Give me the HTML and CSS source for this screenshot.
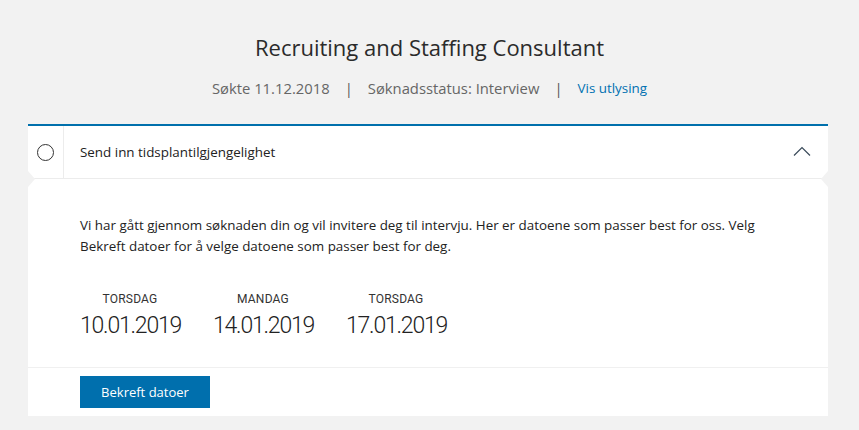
FILE: index.html
```html
<!DOCTYPE html>
<html lang="no">
<head>
<meta charset="utf-8">
<title>Recruiting and Staffing Consultant</title>
<link rel="stylesheet" href="styles.css">
</head>
<body>
<header class="page-head">
  <h1 class="title">Recruiting and Staffing Consultant</h1>
  <div class="meta">
    <span>Søkte 11.12.2018</span>
    <span class="sep">|</span>
    <span>Søknadsstatus: Interview</span>
    <span class="sep">|</span>
    <a class="link" href="#">Vis utlysing</a>
  </div>
</header>
<section class="card">
  <div class="card-head">
    <div class="status-cell"><span class="circle"></span></div>
    <div class="head-title">Send inn tidsplantilgjengelighet</div>
    <svg class="chevron" width="18" height="10" viewBox="0 0 18 10"><path d="M1 9.5 L9 1.5 L17 9.5" fill="none" stroke="#3a4a5a" stroke-width="1.2"/></svg>
  </div>
  <div class="card-body">
    <p class="intro">Vi har gått gjennom søknaden din og vil invitere deg til intervju. Her er datoene som passer best for oss. Velg Bekreft datoer for å velge datoene som passer best for deg.</p>
    <div class="dates">
      <div class="date"><div class="day">TORSDAG</div><div class="val">10.01.2019</div></div>
      <div class="date"><div class="day">MANDAG</div><div class="val">14.01.2019</div></div>
      <div class="date"><div class="day">TORSDAG</div><div class="val">17.01.2019</div></div>
    </div>
  </div>
  <div class="card-foot">
    <button class="btn" type="button">Bekreft datoer</button>
  </div>
</section>
</body>
</html>
```
FILE: styles.css
```css
* { box-sizing: border-box; }
html, body { margin: 0; padding: 0; }
body {
  background: #f2f2f2;
  font-family: "Open Sans", "Noto Sans", sans-serif;
  color: #222;
  width: 859px;
  height: 430px;
  overflow: hidden;
}
.page-head {
  padding-top: 32px;
  text-align: center;
}
.title {
  margin: 0;
  font-size: 22px;
  line-height: 30px;
  font-weight: 400;
  color: #2b2b2b;
}
.meta {
  margin-top: 16px;
  display: flex;
  justify-content: center;
  align-items: center;
  gap: 15px;
  font-size: 14.8px;
  line-height: 20px;
  color: #666;
}
.meta .sep { color: #555; }
.link {
  color: #0071b1;
  text-decoration: none;
  font-size: 13.4px;
}
.card {
  position: relative;
  margin: 26px 31px 0 28px;
  background: #fff;
  border-top: 2px solid #0070ac;
}
.card-head {
  position: relative;
  display: flex;
  align-items: center;
  height: 53px;
  border-bottom: 1px solid #ececec;
}
.card-head::before,
.card-head::after {
  content: "";
  position: absolute;
  bottom: -9px;
  width: 0;
  height: 0;
  border-top: 8.5px solid transparent;
  border-bottom: 8.5px solid transparent;
}
.card-head::before { left: 0; border-left: 7px solid #f2f2f2; }
.card-head::after { right: 0; border-right: 7px solid #f2f2f2; }
.status-cell {
  width: 36px;
  height: 100%;
  border-right: 1px solid #ececec;
  display: flex;
  align-items: center;
  justify-content: center;
}
.circle {
  width: 17px;
  height: 17px;
  border: 1.5px solid #333;
  border-radius: 50%;
}
.head-title {
  flex: 1;
  padding-left: 16px;
  font-size: 13.4px;
  color: #222;
}
.chevron { margin-right: 17px; margin-top: -2px; }
.card-body {
  padding: 36px 52px 27px;
  border-bottom: 1px solid #f0f0f0;
}
.intro {
  margin: 0;
  max-width: 700px;
  font-size: 13.4px;
  line-height: 21px;
  color: #222;
}
.dates {
  display: flex;
  gap: 33px;
  margin-top: 35px;
}
.date {
  width: 100px;
  text-align: center;
}
.day {
  font-family: "Roboto", sans-serif;
  font-size: 12px;
  line-height: 14px;
  letter-spacing: 0.2px;
  color: #333;
}
.val {
  margin-top: 6px;
  font-family: "Roboto", sans-serif;
  font-weight: 300;
  font-size: 23px;
  line-height: 28px;
  letter-spacing: -1.2px;
  color: #222;
  white-space: nowrap;
}
.card-foot {
  padding: 8px 52px;
}
.btn {
  display: block;
  width: 130px;
  height: 32px;
  border: 0;
  background: #006fad;
  color: #fff;
  font-family: "Open Sans", "Noto Sans", sans-serif;
  font-size: 13px;
  cursor: pointer;
}
```
